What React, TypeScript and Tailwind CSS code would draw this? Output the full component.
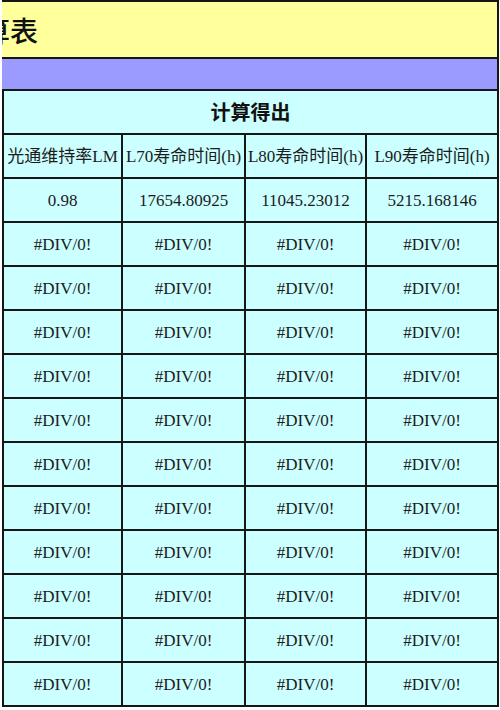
const font = { fontFamily: '"Liberation Serif", "Noto Sans CJK SC", serif' }

const headers = ["光通维持率LM", "L70寿命时间(h)", "L80寿命时间(h)", "L90寿命时间(h)"]

const rows: string[][] = [
  ["0.98", "17654.80925", "11045.23012", "5215.168146"],
  ...Array.from({ length: 11 }, () => ["#DIV/0!", "#DIV/0!", "#DIV/0!", "#DIV/0!"]),
]

const colClasses = [
  "w-[119px] border-r-2",
  "w-[123px] border-r-2",
  "w-[121px] border-r-2",
  "flex-1",
]

function Row({ cells }: { cells: string[] }) {
  return (
    <div className="flex h-[44px] border-b-2 border-[#161616]">
      {cells.map((c, i) => (
        <div
          key={i}
          className={`${colClasses[i]} flex items-center justify-center border-[#161616] whitespace-nowrap overflow-hidden text-[17px] leading-none text-[#1c1c1c]`}
          style={font}
        >
          {c}
        </div>
      ))}
    </div>
  )
}

export default function App() {
  return (
    <div className="w-[500px] h-[710px] bg-white overflow-hidden">
      <div className="ml-[2px] w-[497px]">
        <div className="h-[59px] flex items-center bg-[#ffff9c] border-t-2 border-b-2 border-r-2 border-[#161616] overflow-hidden">
          <span
            className="ml-[-20px] text-[28px] font-medium leading-none text-[#111] whitespace-nowrap"
            style={{ fontFamily: '"Noto Sans CJK SC", sans-serif' }}
          >
            算表
          </span>
        </div>
        <div className="h-[30px] bg-[#9b9bff] border-r-2 border-[#161616]" />
        <div className="bg-[#ccffff] border-t-2 border-l-2 border-r-2 border-[#161616]">
          <div className="h-[44px] flex items-center justify-center border-b-2 border-[#161616]">
            <span
              className="text-[20px] font-bold leading-none text-[#111]"
              style={{ fontFamily: '"Noto Sans CJK SC", sans-serif' }}
            >
              计算得出
            </span>
          </div>
          <Row cells={headers} />
          {rows.map((r, i) => (
            <Row key={i} cells={r} />
          ))}
        </div>
      </div>
    </div>
  )
}
